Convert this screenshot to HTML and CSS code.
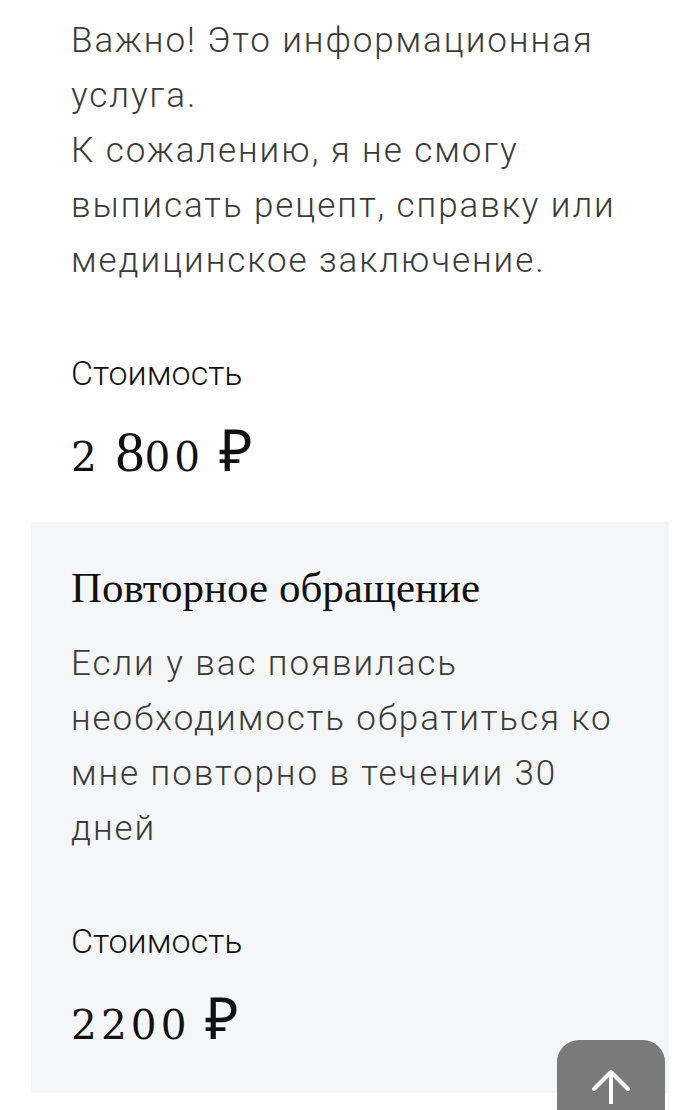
FILE: index.html
```html
<!DOCTYPE html>
<html lang="ru">
<head>
    <meta charset="UTF-8">
    <meta name="viewport" content="width=device-width, initial-scale=1.0">
    <title>Консультация</title>
    <link rel="stylesheet" href="styles.css">
</head>
<body>

    <div class="page">

        <div class="service">
            <p class="service-text">Важно! Это информационная услуга.<br>К сожалению, я не смогу выписать рецепт, справку или медицинское заключение.</p>
            <div class="price-label">Стоимость</div>
            <div class="price"><span class="low">2</span> 8<span class="low">00</span> ₽</div>
        </div>

        <div class="service service-alt">
            <h2 class="service-title">Повторное обращение</h2>
            <p class="service-text">Если у вас появилась необходимость обратиться ко мне повторно в течении 30 дней</p>
            <div class="price-label">Стоимость</div>
            <div class="price"><span class="low">2200</span> ₽</div>
        </div>

    </div>

    <button class="to-top" aria-label="Наверх">
        <svg width="40" height="40" viewBox="0 0 40 40" fill="none" stroke="#fff" stroke-width="4" stroke-linecap="round" stroke-linejoin="round">
            <path d="M3 25 L20 8 L37 25"/>
            <path d="M20 9 V44"/>
        </svg>
    </button>

</body>
</html>
```

FILE: styles.css
```css
body {
    margin: 0;
    background-color: #fff;
    font-family: Roboto, "Noto Sans", sans-serif;
    overflow: hidden;
}
.page {
    padding: 13px 31px 0;
}
.service {
    padding: 0 40px 33px;
}
.service-alt {
    background-color: #f5f6f8;
    padding-top: 42px;
    padding-bottom: 36px;
}
.service-text {
    margin: 0;
    font-size: 35px;
    font-weight: 300;
    line-height: 55px;
    letter-spacing: 0.055em;
    color: #3b3b3b;
}
.service-title {
    margin: 0 0 24px;
    font-family: "Liberation Serif", serif;
    font-weight: 400;
    font-size: 43px;
    line-height: 48px;
    color: #111;
}
.price-label {
    margin-top: 63px;
    font-size: 34px;
    font-weight: 300;
    line-height: 44px;
    color: #111;
}
.price {
    margin-top: 25px;
    font-family: "Liberation Serif", serif;
    font-size: 58px;
    line-height: 64px;
    color: #111;
}
/* digits that sit on the x-height, like old-style figures */
.price .low {
    font-family: "DejaVu Serif", serif;
    font-size: 0.7em;
    letter-spacing: 0.1em;
}
.to-top {
    position: fixed;
    right: 35px;
    bottom: -30px;
    width: 108px;
    height: 100px;
    border: none;
    border-radius: 22px;
    background-color: #7a7a7a;
    display: flex;
    justify-content: center;
    align-items: flex-start;
    padding: 24px 0 0;
    box-sizing: border-box;
}
```
